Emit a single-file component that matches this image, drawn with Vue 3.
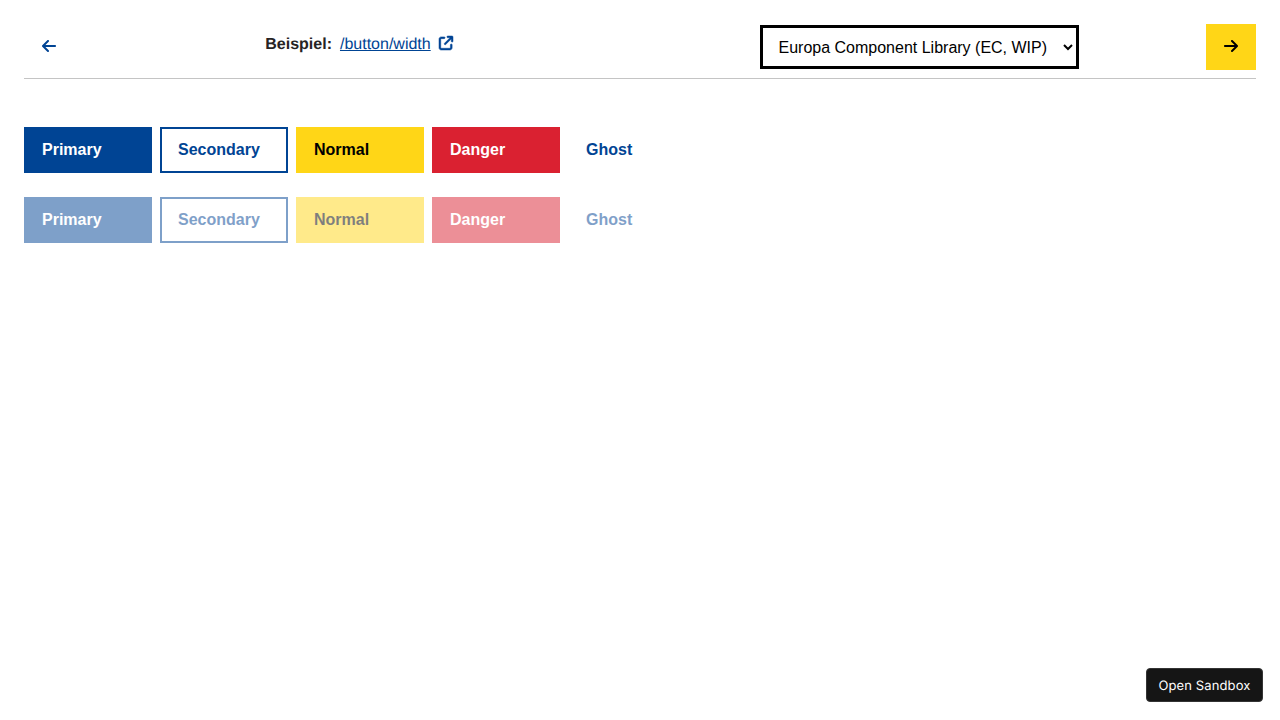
<script setup>
const variants = ['Primary', 'Secondary', 'Normal', 'Danger', 'Ghost']
const rows = [{ disabled: false }, { disabled: true }]
</script>

<template>
  <div class="page">
    <header class="bar">
      <button class="btn ghost nav" aria-label="Zurück">
        <svg width="14" height="16" viewBox="0 0 448 512" fill="currentColor">
          <path d="M9.4 233.4c-12.5 12.5-12.5 32.8 0 45.3l160 160c12.5 12.5 32.8 12.5 45.3 0s12.5-32.8 0-45.3L109.2 288 416 288c17.7 0 32-14.3 32-32s-14.3-32-32-32l-306.7 0L214.6 118.6c12.5-12.5 12.5-32.8 0-45.3s-32.8-12.5-45.3 0l-160 160z" />
        </svg>
      </button>
      <div class="example">
        <strong>Beispiel:</strong>
        <a class="link" href="#"><span>/button/width</span>
          <svg class="external" width="14" height="14" viewBox="0 0 512 512" fill="currentColor">
            <path d="M320 0c-17.7 0-32 14.3-32 32s14.3 32 32 32l82.7 0L201.4 265.4c-12.5 12.5-12.5 32.8 0 45.3s32.8 12.5 45.3 0L448 109.3l0 82.7c0 17.7 14.3 32 32 32s32-14.3 32-32l0-160c0-17.7-14.3-32-32-32L320 0zM80 32C35.8 32 0 67.8 0 112L0 432c0 44.2 35.8 80 80 80l320 0c44.2 0 80-35.8 80-80l0-112c0-17.7-14.3-32-32-32s-32 14.3-32 32l0 112c0 8.8-7.2 16-16 16L80 448c-8.8 0-16-7.2-16-16l0-320c0-8.8 7.2-16 16-16l112 0c17.7 0 32-14.3 32-32s-14.3-32-32-32L80 32z" />
          </svg>
        </a>
      </div>
      <div class="theme">
        <select class="select">
          <option>Europa Component Library (EC, WIP)</option>
        </select>
      </div>
      <button class="btn normal nav" aria-label="Weiter">
        <svg width="14" height="16" viewBox="0 0 448 512" fill="currentColor">
          <path d="M438.6 278.6c12.5-12.5 12.5-32.8 0-45.3l-160-160c-12.5-12.5-32.8-12.5-45.3 0s-12.5 32.8 0 45.3L338.8 224 32 224c-17.7 0-32 14.3-32 32s14.3 32 32 32l306.7 0L233.4 393.4c-12.5 12.5-12.5 32.8 0 45.3s32.8 12.5 45.3 0l160-160z" />
        </svg>
      </button>
    </header>

    <main class="rows">
      <div v-for="(row, i) in rows" :key="i" class="row">
        <button
          v-for="name in variants"
          :key="name"
          class="btn wide"
          :class="name.toLowerCase()"
          :disabled="row.disabled"
        >{{ name }}</button>
      </div>
    </main>

    <button class="sandbox">Open Sandbox</button>
  </div>
</template>

<style>
body {
  background: #fff;
}
</style>

<style scoped>
.page {
  box-sizing: border-box;
  min-height: 720px;
  padding: 24px;
  font: 16px/24px "Liberation Sans", Arial, sans-serif;
  color: #262b38;
  text-rendering: geometricPrecision;
}
.bar {
  display: grid;
  grid-template-columns: 50px 571px 561px 50px;
  height: 54px;
  border-bottom: 1px solid #c4c4c4;
}
.example {
  display: flex;
  align-items: center;
  justify-content: center;
  gap: 8px;
  height: 24px;
  margin-top: 8px;
  padding-right: 1px;
}
.example strong {
  color: #262324;
}
.link {
  display: flex;
  align-items: center;
  gap: 8px;
  color: #004494;
  text-decoration: none;
}
.link span {
  text-decoration: underline;
}
.example strong,
.link span {
  padding-top: 1px;
}
.external {
  margin-top: -2px;
  overflow: visible;
  stroke: currentColor;
  stroke-width: 18;
}
.theme {
  padding: 1px 0 0 115px;
}
.select {
  box-sizing: border-box;
  width: 319px;
  height: 44px;
  margin: 0;
  padding: 0 0 0 11.5px;
  border: 3px solid #000;
  border-radius: 0;
  background: #fff;
  color: #000;
  font: inherit;
  outline: none;
}
.btn {
  box-sizing: border-box;
  height: 46px;
  margin: 0;
  padding: 0 16px;
  border: 2px solid transparent;
  border-radius: 0;
  font: bold 16px/18px "Liberation Sans", Arial, sans-serif;
  text-align: left;
}
.btn:disabled {
  opacity: 0.5;
}
.nav {
  display: flex;
  align-items: center;
  width: 50px;
  padding: 0 16px 2px;
}
.wide {
  width: 128px;
}
.primary {
  border-color: #004494;
  background: #004494;
  color: #fff;
}
.secondary {
  border-color: #004494;
  background: #fff;
  color: #004494;
}
.normal {
  border-color: #ffd617;
  background: #ffd617;
  color: #000;
}
.danger {
  border-color: #da2131;
  background: #da2131;
  color: #fff;
}
.ghost {
  background: transparent;
  color: #004494;
}
.rows {
  display: flex;
  flex-direction: column;
  gap: 24px;
  margin-top: 48px;
}
.row {
  display: flex;
  gap: 8px;
}
.sandbox {
  position: fixed;
  right: 17px;
  bottom: 18px;
  box-sizing: border-box;
  width: 117px;
  height: 34px;
  padding: 2px 0 0;
  border: 1px solid #343434;
  border-radius: 4px;
  background: #151515;
  color: #fff;
  font: 400 13px/16px Inter, sans-serif;
  letter-spacing: 0.12px;
  text-align: center;
  text-rendering: geometricPrecision;
}
</style>
